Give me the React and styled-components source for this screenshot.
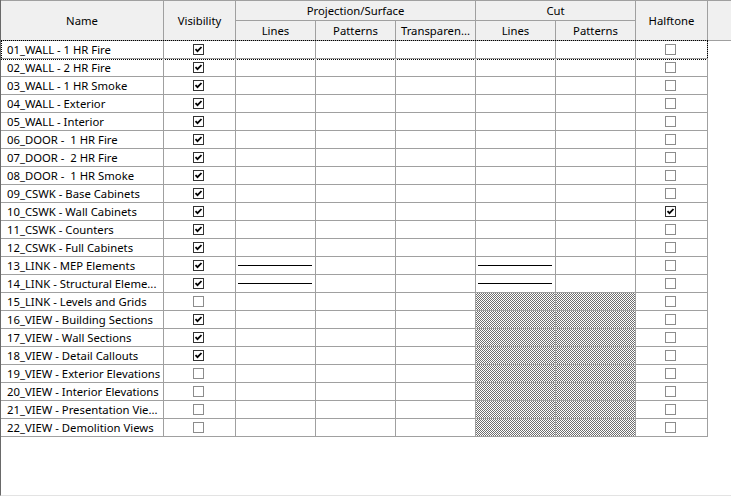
import React from "react";
import styled, { createGlobalStyle, css } from "styled-components";

const Global = createGlobalStyle`
  html, body { margin: 0; padding: 0; background: #fff; }
  body { font-family: "Noto Sans", "Liberation Sans", sans-serif; font-size: 11.3px; color: #000; }
`;

const COLS = "163px 72px 80px 80px 80px 80px 80px 72px";
const GRID = "#a0a0a0";

const Frame = styled.div`
  width: 731px;
  height: 496px;
  box-sizing: border-box;
  border-left: 1px solid #696969;
  border-bottom: 1px solid #e3e3e3;
  overflow: hidden;
  background: #fff;
`;

const Header = styled.div`
  display: grid;
  grid-template-columns: ${COLS} 1fr;
  grid-template-rows: 20px 20px;
  border-top: 1px solid ${GRID};
  background: #f0f0f0;
`;

const HeadCell = styled.div`
  box-sizing: border-box;
  display: flex;
  align-items: center;
  justify-content: center;
  border-right: ${(p) => (p.$filler ? "none" : `1px solid ${GRID}`)};
  border-bottom: 1px solid ${GRID};
  grid-column: ${(p) => p.$col};
  grid-row: ${(p) => p.$row};
  white-space: nowrap;
  overflow: hidden;
  padding-bottom: 1px;
`;

const Body = styled.div`
  display: flex;
  flex-direction: column;
  width: 707px;
`;

const Row = styled.div`
  position: relative;
  display: grid;
  grid-template-columns: ${COLS};
  height: 18px;
  ${(p) =>
    p.$focused &&
    css`
      &::after {
        content: "";
        position: absolute;
        left: 0;
        right: 0;
        top: -1px;
        bottom: -1px;
        border: 1px dotted #000;
        pointer-events: none;
      }
    `}
`;

const Cell = styled.div`
  box-sizing: border-box;
  border-right: 1px solid ${GRID};
  border-bottom: 1px solid ${GRID};
  display: flex;
  align-items: center;
  justify-content: ${(p) => (p.$center ? "center" : "flex-start")};
  overflow: hidden;
  white-space: pre;
  ${(p) =>
    p.$hatched &&
    css`
      background-image: repeating-conic-gradient(#6f6f6f 0 25%, #ffffff 0 50%);
      background-size: 2px 2px;
    `}
`;

const NameCell = styled(Cell)`
  padding-left: 6px;
  padding-bottom: 1px;
`;

const LineSample = styled.div`
  width: 74px;
  height: 1px;
  margin-left: 2px;
  background: #000;
`;

const Box = styled.div`
  box-sizing: border-box;
  width: 11px;
  height: 11px;
  margin-left: -2px;
  margin-bottom: 1px;
  border: 1px solid ${(p) => (p.$checked ? "#333" : "#8c8c8c")};
  background: #fff;
  display: flex;
  align-items: center;
  justify-content: center;
`;

const Check = () => (
  <svg width="9" height="9" viewBox="0 0 9 9">
    <path d="M1.5 4.2 L3.5 6.2 L7.5 2" fill="none" stroke="#000" strokeWidth="1.8" />
  </svg>
);

const CheckBox = ({ checked }) => (
  <Box $checked={checked}>{checked && <Check />}</Box>
);

const rows = [
  ["01_WALL - 1 HR Fire", true],
  ["02_WALL - 2 HR Fire", true],
  ["03_WALL - 1 HR Smoke", true],
  ["04_WALL - Exterior", true],
  ["05_WALL - Interior", true],
  ["06_DOOR -  1 HR Fire", true],
  ["07_DOOR -  2 HR Fire", true],
  ["08_DOOR -  1 HR Smoke", true],
  ["09_CSWK - Base Cabinets", true],
  ["10_CSWK - Wall Cabinets", true, false, true],
  ["11_CSWK - Counters", true],
  ["12_CSWK - Full Cabinets", true],
  ["13_LINK - MEP Elements", true, "lines"],
  ["14_LINK - Structural Eleme...", true, "lines"],
  ["15_LINK - Levels and Grids", false, "hatch"],
  ["16_VIEW - Building Sections", true, "hatch"],
  ["17_VIEW - Wall Sections", true, "hatch"],
  ["18_VIEW - Detail Callouts", true, "hatch"],
  ["19_VIEW - Exterior Elevations", false, "hatch"],
  ["20_VIEW - Interior Elevations", false, "hatch"],
  ["21_VIEW - Presentation Vie...", false, "hatch"],
  ["22_VIEW - Demolition Views", false, "hatch"],
];

export default function App() {
  return (
    <>
      <Global />
      <Frame>
        <Header>
          <HeadCell $col="1" $row="1 / 3">Name</HeadCell>
          <HeadCell $col="2" $row="1 / 3">Visibility</HeadCell>
          <HeadCell $col="3 / 6" $row="1">Projection/Surface</HeadCell>
          <HeadCell $col="6 / 8" $row="1">Cut</HeadCell>
          <HeadCell $col="8" $row="1 / 3">Halftone</HeadCell>
          <HeadCell $col="9" $row="1 / 3" $filler />
          <HeadCell $col="3" $row="2">Lines</HeadCell>
          <HeadCell $col="4" $row="2">Patterns</HeadCell>
          <HeadCell $col="5" $row="2">Transparen...</HeadCell>
          <HeadCell $col="6" $row="2">Lines</HeadCell>
          <HeadCell $col="7" $row="2">Patterns</HeadCell>
        </Header>
        <Body>
          {rows.map(([name, vis, mode, half], i) => (
            <Row key={name} $focused={i === 0}>
              <NameCell>{name}</NameCell>
              <Cell $center>
                <CheckBox checked={vis} />
              </Cell>
              <Cell>{mode === "lines" && <LineSample />}</Cell>
              <Cell />
              <Cell />
              <Cell $hatched={mode === "hatch"}>{mode === "lines" && <LineSample />}</Cell>
              <Cell $hatched={mode === "hatch"} />
              <Cell $center>
                <CheckBox checked={!!half} />
              </Cell>
            </Row>
          ))}
        </Body>
      </Frame>
    </>
  );
}
